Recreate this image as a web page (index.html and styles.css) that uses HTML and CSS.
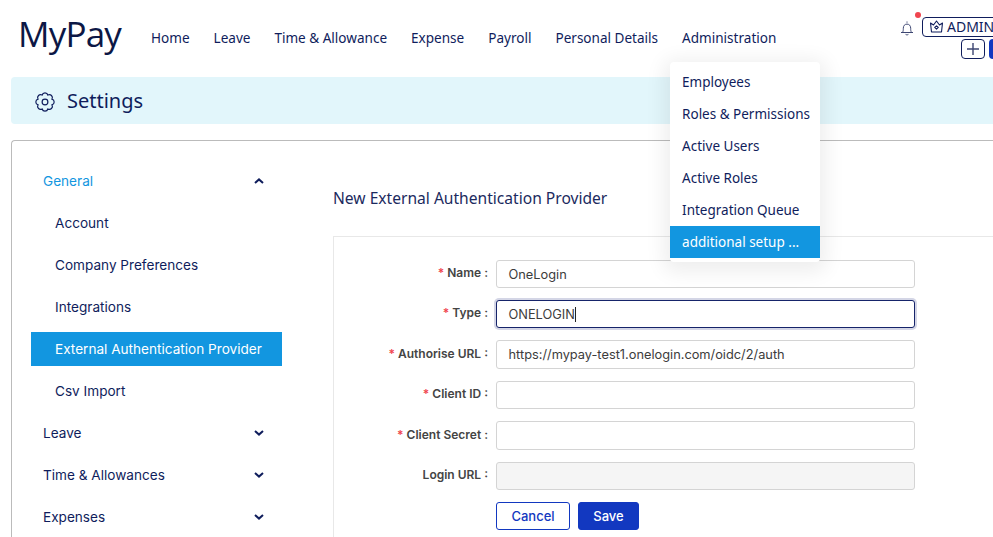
FILE: index.html
```html
<!DOCTYPE html>
<html lang="en">
<head>
<meta charset="utf-8">
<title>MyPay Settings</title>
<link rel="stylesheet" href="styles.css">
</head>
<body>
<header class="topbar">
  <div class="logo">MyPay</div>
  <nav class="mainnav">
    <a>Home</a><a>Leave</a><a>Time &amp; Allowance</a><a>Expense</a><a>Payroll</a><a>Personal Details</a>
    <div class="nav-admin"><a>Administration</a>
      <ul class="dropdown">
        <li>Employees</li><li>Roles &amp; Permissions</li><li>Active Users</li><li>Active Roles</li><li>Integration Queue</li><li class="selected">additional setup ...</li>
      </ul>
    </div>
  </nav>
  <div class="top-actions">
    <div class="action-row">
      <span class="bell">
        <svg width="14" height="15" viewBox="0 0 14 15" fill="none" stroke="#3d4672" stroke-width="1"><path d="M7 .5v1.2"/><path d="M1 11.5h12M2.4 11.5c.9-1.2.9-2.6.9-4.2 0-2.6 1.5-4.2 3.7-4.2s3.7 1.6 3.7 4.2c0 1.6 0 3 .9 4.2"/><path d="M5.6 13.4c.8.6 2 .6 2.8 0"/></svg>
        <i class="dot"></i>
      </span>
      <button class="admin-btn">
        <svg width="15" height="14" viewBox="0 0 15 14" fill="none" stroke="#0f1d5c" stroke-width="1.1" stroke-linejoin="round"><path d="M1.5 3l3 2 3-4 3 4 3-2-1 9h-10z"/><path d="M7.5 5.8l1.8 1.6-1.8 1.7-1.8-1.7z"/></svg>
        ADMIN
      </button>
    </div>
    <div class="action-row second">
      <button class="plus-btn"><svg width="14" height="14" viewBox="0 0 14 14" stroke="#3d4672" stroke-width="1.4"><path d="M7 1v12M1 7h12"/></svg></button>
      <span class="blue-chip"></span>
    </div>
  </div>
</header>

<section class="titlebar">
  <svg class="gear" width="20" height="20" viewBox="1 1 18 18" fill="none" stroke="#0f1d5c" stroke-width="1.05"><circle cx="10" cy="10" r="2.6"/><path d="M16.28 7.4A2.7 2.7 0 0 1 16.28 12.6A2.7 2.7 0 0 1 12.6 16.28A2.7 2.7 0 0 1 7.4 16.28A2.7 2.7 0 0 1 3.72 12.6A2.7 2.7 0 0 1 3.72 7.4A2.7 2.7 0 0 1 7.4 3.72A2.7 2.7 0 0 1 12.6 3.72A2.7 2.7 0 0 1 16.28 7.4Z"/></svg>
  <h1>Settings</h1>
</section>

<main class="card">
  <aside class="sidebar">
    <div class="side-group open">General<svg class="chev" width="10" height="6" viewBox="0 0 10 6"><path d="M1 5l4-3.6L9 5" fill="none" stroke="#0f1d5c" stroke-width="2"/></svg></div>
    <div class="side-item">Account</div>
    <div class="side-item">Company Preferences</div>
    <div class="side-item">Integrations</div>
    <div class="side-item active">External Authentication Provider</div>
    <div class="side-item">Csv Import</div>
    <div class="side-group">Leave<svg class="chev" width="10" height="6" viewBox="0 0 10 6"><path d="M1 1l4 3.6L9 1" fill="none" stroke="#0f1d5c" stroke-width="2"/></svg></div>
    <div class="side-group">Time &amp; Allowances<svg class="chev" width="10" height="6" viewBox="0 0 10 6"><path d="M1 1l4 3.6L9 1" fill="none" stroke="#0f1d5c" stroke-width="2"/></svg></div>
    <div class="side-group">Expenses<svg class="chev" width="10" height="6" viewBox="0 0 10 6"><path d="M1 1l4 3.6L9 1" fill="none" stroke="#0f1d5c" stroke-width="2"/></svg></div>
  </aside>
  <div class="content">
    <h2>New External Authentication Provider</h2>
    <form class="panel">
      <div class="row"><label class="req">Name :</label><div class="field">OneLogin</div></div>
      <div class="row"><label class="req">Type :</label><div class="field focused">ONELOGIN<i class="caret"></i></div></div>
      <div class="row tall"><label class="req">Authorise URL :</label><div class="field">https://mypay-test1.onelogin.com/oidc/2/auth</div></div>
      <div class="row"><label class="req">Client ID :</label><div class="field"></div></div>
      <div class="row tall"><label class="req">Client Secret :</label><div class="field"></div></div>
      <div class="row"><label>Login URL :</label><div class="field disabled"></div></div>
      <div class="buttons"><button type="button" class="btn cancel">Cancel</button><button type="button" class="btn save">Save</button></div>
    </form>
  </div>
</main>
</body>
</html>
```
FILE: styles.css
```css
* { box-sizing: border-box; }
html, body { margin: 0; height: 537px; overflow: hidden; background: #fff; }
body { width: 993px; font-family: Inter, "Liberation Sans", sans-serif; color: #0f1d5c; }

.topbar { height: 77px; display: flex; position: relative; }
.logo { width: 151px; padding: 9px 0 0 18px; font: 500 35px/50px "Open Sans", sans-serif; letter-spacing: -.8px; color: #0c1745; }
.mainnav { display: flex; gap: 24px; padding-top: 29px; font: 400 13.55px/18px "Noto Sans", sans-serif; height: 77px; }
.mainnav a { white-space: nowrap; }
.nav-admin { position: relative; }
.dropdown { position: absolute; z-index: 5; left: -12px; top: 33px; width: 150px; margin: 0; padding: 4px 0; list-style: none; background: #fff; border-radius: 4px; box-shadow: 0 4px 20px 6px rgba(0,0,0,.07); font-size: 13.5px; }
.dropdown li { height: 32px; padding-left: 12px; line-height: 32px; white-space: nowrap; }
.dropdown li.selected { background: #1296e0; color: #fff; }

.top-actions { position: absolute; left: 897px; top: 12px; width: 96px; height: 49px; padding-top: 5px; overflow: hidden; }
.action-row { display: flex; align-items: flex-start; }
.bell { position: relative; flex: none; width: 25px; height: 20px; padding: 3px 0 0 3px; }
.dot { position: absolute; left: 18px; top: -5px; width: 6px; height: 6px; border-radius: 50%; background: #f0454f; }
.admin-btn { flex: none; display: flex; align-items: center; gap: 3px; width: 90px; height: 20px; padding: 0 0 0 6px; background: #fff; border: 1px solid #0f1d5c; border-radius: 4px; font: 400 14px/18px "Noto Sans", sans-serif; color: #0f1d5c; }
.second { padding: 2px 0 0 64px; gap: 4px; }
.plus-btn { flex: none; width: 24px; height: 20px; padding: 2px 0 0; background: #fff; border: 1px solid #0f1d5c; border-radius: 4px; }
.blue-chip { flex: none; width: 20px; height: 20px; background: #1238c0; border-radius: 4px; }

.titlebar { margin-left: 11px; height: 47px; display: flex; align-items: center; gap: 12px; padding-left: 24px; background: #e2f6fb; border-radius: 4px 0 0 4px; }
.titlebar h1 { margin: 0; font: 400 20px/26px "Noto Sans", sans-serif; }
.gear { margin-top: 3px; }

.card { margin: 16px 0 0 11px; height: 420px; display: flex; border: 1px solid #bbb; border-right: 0; border-bottom: 0; border-radius: 4px 0 0 0; }
.sidebar { width: 271px; flex: none; padding: 19px 0 0 19px; font-size: 13.6px; }
.side-group, .side-item { height: 42px; line-height: 42px; white-space: nowrap; }
.side-group { display: flex; justify-content: space-between; align-items: center; width: 251px; padding: 0 18px 0 12px; }
.side-group.open { color: #1296e0; }
.side-item { width: 251px; height: 42px; padding-left: 24px; }
.side-item.active { height: 34px; line-height: 34px; margin: 4px 0; background: #1296e0; color: #fff; }
.chev { flex: none; }

.content { flex: 1; padding: 47px 0 0 50px; }
.content h2 { margin: 0 0 28px; font: 400 15.6px/20px "Noto Sans", sans-serif; color: #1b2a5e; }
.panel { border: 1px solid #e8e8e8; border-right: 0; border-bottom: 0; height: 320px; padding: 22px 0 0 0; }
.row { display: flex; align-items: center; height: 29px; margin-bottom: 11px; }
.row.tall { height: 30px; }
.row label { width: 154px; flex: none; margin-right: 1px; padding-bottom: 2px; text-align: right; font-size: 12px; font-weight: 600; color: #444; white-space: nowrap; }
.req::before { content: "* "; color: #f0454f; }
.field { margin-left: 7px; width: 419px; height: 28px; padding: 0 12px 0 11.5px; border: 1px solid #d4d4d4; border-radius: 3px; font-size: 12.8px; line-height: 27px; color: #3c3c3c; background: #fff; white-space: nowrap; }
.tall .field { height: 29px; }
.field.focused { border: 1.5px solid #16246a; box-shadow: 0 0 0 2px #d4d6e6; }
.field.disabled { background: #f5f5f5; }
.caret { display: inline-block; width: 1px; height: 15px; background: #222; vertical-align: -3px; }
.buttons { display: flex; gap: 8px; margin: 12px 0 0 162px; }
.row:nth-last-child(2) { margin-bottom: 0; }
.btn { height: 28px; border-radius: 3px; font: 500 13px/26px Inter, sans-serif; padding: 0; }
.cancel { width: 74px; background: #fff; border: 1px solid #1238c0; color: #1238c0; }
.save { width: 61px; background: #1238c0; border: 1px solid #1238c0; color: #fff; }
```
